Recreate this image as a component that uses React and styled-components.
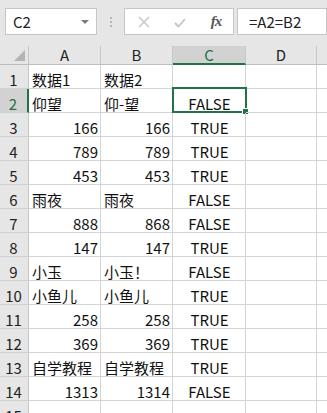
import React from "react";
import styled, { createGlobalStyle, css } from "styled-components";

const Global = createGlobalStyle`
  html, body { margin: 0; padding: 0; background: #ffffff; overflow: hidden; }
  body { font-family: "Noto Sans CJK SC", "Noto Sans", sans-serif; }
`;

const GREEN = "#217346";
const GRID = "#d4d4d4";

const Page = styled.div`
  width: 327px;
  height: 413px;
  overflow: hidden;
  background: #ffffff;
`;

const Toolbar = styled.div`
  display: flex;
  align-items: flex-start;
  height: 46px;
  box-sizing: border-box;
  padding: 8px 0 0 5px;
  background: #e6e6e6;
`;

const NameBox = styled.div`
  position: relative;
  width: 102px;
  height: 27px;
  box-sizing: border-box;
  border: 1px solid #c6c6c6;
  background: #ffffff;
  display: flex;
  align-items: center;
  padding-left: 7px;
  font-size: 15px;
  color: #222;
`;

const Caret = styled.span`
  position: absolute;
  right: 7px;
  top: 11px;
  width: 0;
  height: 0;
  border-left: 4px solid transparent;
  border-right: 4px solid transparent;
  border-top: 4px solid #7a7a7a;
`;

const Grip = styled.div`
  width: 30px;
  height: 27px;
  display: flex;
  flex-direction: column;
  align-items: center;
  justify-content: center;
  gap: 2px;
`;

const Dot = styled.span`
  width: 2px;
  height: 2px;
  background: #b5b5b5;
`;

const FxBox = styled.div`
  width: 110px;
  height: 27px;
  box-sizing: border-box;
  border: 1px solid #c6c6c6;
  background: #ffffff;
  display: grid;
  grid-template-columns: 36px 36px 36px;
  padding-left: 1px;
  align-items: center;
  justify-items: center;
`;

const FxText = styled.span`
  font-family: "Liberation Serif", "DejaVu Serif", serif;
  font-style: italic;
  font-weight: bold;
  font-size: 15px;
  color: #555;
  letter-spacing: -1px;
`;

const Formula = styled.div`
  width: 90px;
  height: 27px;
  margin-left: 3px;
  flex-shrink: 0;
  box-sizing: border-box;
  border: 1px solid #c6c6c6;
  background: #ffffff;
  display: flex;
  align-items: center;
  padding-left: 11px;
  font-size: 15px;
  color: #222;
`;

const Sheet = styled.div`
  display: grid;
  grid-template-columns: 29px 72px 72px 73px 71px 72px;
  grid-auto-rows: 24px;
  grid-template-rows: 19px;
`;

const Corner = styled.div`
  position: relative;
  background: #e6e6e6;
  border-right: 1px solid #c6c6c6;
  border-bottom: 1px solid #bdbdbd;
  box-sizing: border-box;
  &::after {
    content: "";
    position: absolute;
    right: 3px;
    bottom: 3px;
    width: 0;
    height: 0;
    border-left: 11px solid transparent;
    border-bottom: 11px solid #b4b4b4;
  }
`;

const ColHead = styled.div`
  background: ${(p) => (p.$active ? "#d2d2d2" : "#e6e6e6")};
  color: ${(p) => (p.$active ? GREEN : "#222")};
  box-sizing: border-box;
  border-right: 1px solid #c6c6c6;
  border-bottom: ${(p) => (p.$active ? `2px solid ${GREEN}` : "1px solid #bdbdbd")};
  display: flex;
  align-items: flex-end;
  justify-content: center;
  font-size: 15px;
  line-height: 16px;
  padding-bottom: ${(p) => (p.$active ? "0px" : "1px")};
`;

const RowHead = styled.div`
  background: ${(p) => (p.$active ? "#d2d2d2" : "#e6e6e6")};
  color: ${(p) => (p.$active ? GREEN : "#222")};
  box-sizing: border-box;
  border-right: ${(p) => (p.$active ? `2px solid ${GREEN}` : "1px solid #c6c6c6")};
  border-bottom: 1px solid #d0d0d0;
  display: flex;
  align-items: flex-end;
  justify-content: center;
  font-size: 15px;
  line-height: 16px;
  padding-right: 1px;
`;

const Cell = styled.div`
  position: relative;
  box-sizing: border-box;
  border-right: 1px solid ${GRID};
  border-bottom: 1px solid ${GRID};
  display: flex;
  align-items: flex-end;
  justify-content: ${(p) =>
    p.$align === "right" ? "flex-end" : p.$align === "center" ? "center" : "flex-start"};
  padding: 0 2px 0 3px;
  font-size: 15px;
  line-height: 16px;
  color: #111;
  white-space: nowrap;
  ${(p) =>
    p.$selected &&
    css`
      &::before {
        content: "";
        position: absolute;
        left: -1px;
        top: -2px;
        right: -2px;
        bottom: -1px;
        border: 2px solid ${GREEN};
        pointer-events: none;
      }
      &::after {
        content: "";
        position: absolute;
        right: -4px;
        bottom: -3px;
        width: 5px;
        height: 5px;
        background: ${GREEN};
        border: 1px solid #ffffff;
        box-sizing: content-box;
      }
    `}
`;

const XIcon = () => (
  <svg width="14" height="14" viewBox="0 0 14 14">
    <path d="M2 2 L12 12 M12 2 L2 12" stroke="#c4c4c4" strokeWidth="1.4" fill="none" />
  </svg>
);

const CheckIcon = () => (
  <svg width="16" height="14" viewBox="0 0 16 14">
    <path d="M3 8 L6.5 11.5 L13 4" stroke="#c4c4c4" strokeWidth="1.8" fill="none" />
  </svg>
);

const rows = [
  ["数据1", "数据2", ""],
  ["仰望", "仰-望", "FALSE"],
  [166, 166, "TRUE"],
  [789, 789, "TRUE"],
  [453, 453, "TRUE"],
  ["雨夜", "雨夜", "FALSE"],
  [888, 868, "FALSE"],
  [147, 147, "TRUE"],
  ["小玉", "小玉！", "FALSE"],
  ["小鱼儿", "小鱼儿", "TRUE"],
  [258, 258, "TRUE"],
  [369, 369, "TRUE"],
  ["自学教程", "自学教程", "TRUE"],
  [1313, 1314, "FALSE"],
  ["", "", ""],
];

const align = (v) => (typeof v === "number" ? "right" : "left");

export default function App() {
  return (
    <Page>
      <Global />
      <Toolbar>
        <NameBox>
          C2
          <Caret />
        </NameBox>
        <Grip>
          <Dot />
          <Dot />
          <Dot />
        </Grip>
        <FxBox>
          <XIcon />
          <CheckIcon />
          <FxText>fx</FxText>
        </FxBox>
        <Formula>=A2=B2</Formula>
      </Toolbar>
      <Sheet>
        <Corner />
        <ColHead>A</ColHead>
        <ColHead>B</ColHead>
        <ColHead $active>C</ColHead>
        <ColHead>D</ColHead>
        <ColHead>E</ColHead>
        {rows.map((r, i) => (
          <React.Fragment key={i}>
            <RowHead $active={i === 1}>{i + 1}</RowHead>
            <Cell $align={align(r[0])}>{r[0]}</Cell>
            <Cell $align={align(r[1])}>{r[1]}</Cell>
            <Cell $align="center" $selected={i === 1}>
              {r[2]}
            </Cell>
            <Cell />
            <Cell />
          </React.Fragment>
        ))}
      </Sheet>
    </Page>
  );
}
